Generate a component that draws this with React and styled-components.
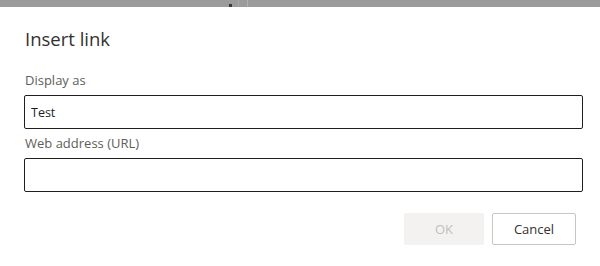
import React from 'react';
import styled, { createGlobalStyle } from 'styled-components';

const GlobalStyle = createGlobalStyle`
  html, body {
    margin: 0;
    padding: 0;
    background: #ffffff;
    font-family: "Open Sans", "Noto Sans", "Liberation Sans", sans-serif;
  }
`;

const Backdrop = styled.div`
  width: 600px;
  height: 266px;
  display: flex;
  flex-direction: column;
  background: #ffffff;
  overflow: hidden;
`;

const BehindStrip = styled.div`
  position: relative;
  height: 7px;
  flex: none;
  background: #9b9b9b;
`;

const StripMark = styled.span`
  position: absolute;
  left: ${props => props.left}px;
  bottom: 0;
  width: ${props => props.width}px;
  height: ${props => props.height}px;
  background: ${props => props.color};
`;

const Dialog = styled.div`
  flex: 1;
  display: flex;
  flex-direction: column;
  padding: 18px 17px 0 24px;
  background: #ffffff;
`;

const Title = styled.h1`
  margin: 0 0 18px 1px;
  font-size: 18.5px;
  font-weight: 400;
  line-height: 28px;
  color: #323130;
`;

const Label = styled.label`
  display: block;
  margin: 0 0 6px 1px;
  font-size: 13px;
  line-height: 18px;
  color: #605e5c;
`;

const Field = styled.input`
  box-sizing: border-box;
  width: 559px;
  height: 34px;
  margin: 0 0 ${props => props.gap}px;
  padding: 0 6px;
  border: 1px solid #201f1e;
  border-radius: 2px;
  font-family: inherit;
  font-size: 12.5px;
  color: #201f1e;
  background: #ffffff;
  outline: none;
`;

const Footer = styled.div`
  display: flex;
  justify-content: flex-end;
  gap: 8px;
  padding-right: 7px;
  margin-top: 21px;
`;

const Button = styled.button`
  box-sizing: border-box;
  height: 32px;
  min-width: ${props => props.width}px;
  padding: 0 16px;
  border-radius: 2px;
  border: 1px solid ${props => (props.disabled ? '#f3f2f1' : '#c8c6c4')};
  background: ${props => (props.disabled ? '#f3f2f1' : '#ffffff')};
  color: ${props => (props.disabled ? '#c0bfbe' : '#323130')};
  font-family: inherit;
  font-size: 13px;
  font-weight: 500;
`;

export default function App() {
  return (
    <>
      <GlobalStyle />
      <Backdrop>
        <BehindStrip>
          <StripMark left={229} width={3} height={3} color="#3a3a3a" />
          <StripMark left={238} width={1} height={7} color="#a8a8a8" />
          <StripMark left={247} width={1} height={7} color="#b0b0b0" />
        </BehindStrip>
        <Dialog>
          <Title>Insert link</Title>
          <Label htmlFor="display-as">Display as</Label>
          <Field id="display-as" defaultValue="Test" gap={5} />
          <Label htmlFor="web-address">Web address (URL)</Label>
          <Field id="web-address" defaultValue="" gap={0} />
          <Footer>
            <Button width={80} disabled>OK</Button>
            <Button width={84}>Cancel</Button>
          </Footer>
        </Dialog>
      </Backdrop>
    </>
  );
}
